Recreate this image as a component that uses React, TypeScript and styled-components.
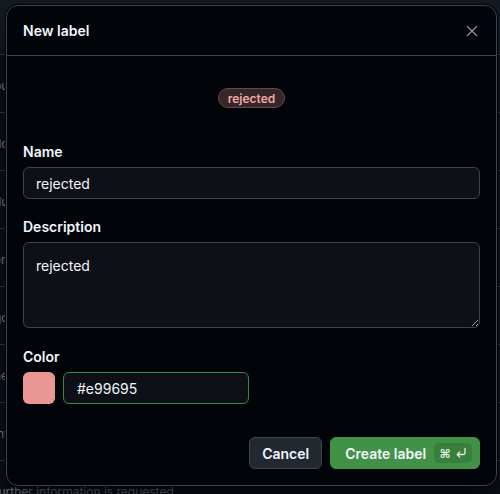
import styled, { createGlobalStyle } from 'styled-components';

const GlobalStyle = createGlobalStyle`
  html, body {
    margin: 0;
    padding: 0;
    background: #0d1117;
    overflow: hidden;
  }
  body {
    font-family: Inter, "Noto Sans", sans-serif;
    color: #f0f6fc;
  }
`;

const backRows = [
  'bug — something is not working',
  'documentation improvements',
  'duplicate of another issue',
  'enhancement request',
  'good first issue',
  'help wanted from others',
  'invalid input',
  'further information is requested',
];

function ReturnIcon() {
  return (
    <svg width="12" height="12" viewBox="0 0 12 12" fill="none">
      <path
        d="M10 1.5v4.5a1.5 1.5 0 0 1-1.5 1.5H2.2M4.8 4.9 2.2 7.5l2.6 2.6"
        stroke="currentColor"
        strokeWidth="1.3"
        strokeLinecap="round"
        strokeLinejoin="round"
      />
    </svg>
  );
}

function CloseIcon() {
  return (
    <svg width="12" height="12" viewBox="0 0 12 12" fill="none">
      <path d="M1.5 1.5l9 9M10.5 1.5l-9 9" stroke="currentColor" strokeWidth="1.3" strokeLinecap="round" />
    </svg>
  );
}

function App() {
  const color = '#e99695';

  return (
    <>
      <GlobalStyle />
      <Styled.Page>
        <Styled.TopStrip />
        {backRows.map((text) => (
          <Styled.BackRow key={text}>
            <Styled.BackText>{text}</Styled.BackText>
          </Styled.BackRow>
        ))}

        <Styled.Dialog>
          <Styled.Header>
            <Styled.Title>New label</Styled.Title>
            <Styled.CloseButton aria-label="Close">
              <CloseIcon />
            </Styled.CloseButton>
          </Styled.Header>

          <Styled.Body>
            <Styled.Preview>
              <Styled.Pill>rejected</Styled.Pill>
            </Styled.Preview>

            <Styled.Field>
              <Styled.Label>Name</Styled.Label>
              <Styled.Input defaultValue="rejected" />
            </Styled.Field>

            <Styled.Field spacing={19}>
              <Styled.Label>Description</Styled.Label>
              <Styled.TextArea defaultValue="rejected" />
            </Styled.Field>

            <Styled.Field spacing={17}>
              <Styled.Label>Color</Styled.Label>
              <Styled.ColorRow>
                <Styled.Swatch color={color} />
                <Styled.HexInput defaultValue={color} />
              </Styled.ColorRow>
            </Styled.Field>
          </Styled.Body>

          <Styled.Footer>
            <Styled.Button>Cancel</Styled.Button>
            <Styled.Button primary>
              Create label
              <Styled.Kbd>
                <span>⌘</span>
                <ReturnIcon />
              </Styled.Kbd>
            </Styled.Button>
          </Styled.Footer>
        </Styled.Dialog>
      </Styled.Page>
    </>
  );
}

export default App;

const Styled = {
  Page: styled.div`
    position: relative;
    width: 500px;
    height: 494px;
    overflow: hidden;
    background: #0d1117;
  `,
  TopStrip: styled.div`
    height: 55px;
    border-bottom: 1px solid #3d444d;
    box-sizing: border-box;
    background: #151b23;
  `,
  BackRow: styled.div`
    display: flex;
    align-items: center;
    height: 58px;
    box-sizing: border-box;
    border-bottom: 1px solid #3d444d;
  `,
  BackText: styled.span`
    margin-left: -6px;
    padding-top: 4px;
    font-size: 12px;
    color: #9198a1;
    white-space: nowrap;
  `,
  Dialog: styled.div`
    position: absolute;
    left: 6px;
    top: 5px;
    width: 491px;
    height: 481px;
    box-sizing: border-box;
    display: flex;
    flex-direction: column;
    background: #010409;
    border: 1px solid #3d444d;
    border-radius: 12px;
    box-shadow: 0 0 0 1px #010409, 0 24px 48px rgba(1, 4, 9, 0.8);
  `,
  Header: styled.div`
    flex-shrink: 0;
    display: flex;
    align-items: center;
    justify-content: space-between;
    height: 49px;
    padding: 0 12px 0 16px;
    border-bottom: 1px solid #3d444d;
  `,
  Title: styled.h1`
    margin: 0;
    font-size: 14px;
    font-weight: 600;
    color: #f0f6fc;
  `,
  CloseButton: styled.button`
    display: flex;
    align-items: center;
    justify-content: center;
    width: 24px;
    height: 24px;
    padding: 0;
    border: none;
    background: transparent;
    color: #9198a1;
  `,
  Body: styled.div`
    flex-shrink: 0;
    padding: 16px 16px 0;
    display: flex;
    flex-direction: column;
  `,
  Preview: styled.div`
    flex-shrink: 0;
    display: flex;
    align-items: center;
    justify-content: center;
    height: 52px;
    margin-bottom: 18px;
  `,
  Pill: styled.span`
    display: inline-flex;
    align-items: center;
    height: 20px;
    box-sizing: border-box;
    padding: 0 9px;
    border-radius: 10px;
    font-size: 12px;
    font-weight: 600;
    color: #f0a9a7;
    background: #352627;
    border: 1px solid #6b4848;
  `,
  Field: styled.div<{ spacing?: number }>`
    flex-shrink: 0;
    display: flex;
    flex-direction: column;
    gap: 5px;
    margin-bottom: ${({ spacing }) => spacing ?? 18}px;
  `,
  Label: styled.label`
    font-size: 14px;
    font-weight: 600;
    line-height: 20px;
    color: #f0f6fc;
  `,
  Input: styled.input`
    height: 32px;
    box-sizing: border-box;
    padding: 0 12px;
    font-family: inherit;
    font-size: 14px;
    color: #f0f6fc;
    background: #0d1117;
    border: 1px solid #3d444d;
    border-radius: 6px;
    outline: none;
  `,
  TextArea: styled.textarea`
    height: 86px;
    box-sizing: border-box;
    padding: 13px 12px;
    font-family: inherit;
    font-size: 14px;
    line-height: 20px;
    color: #f0f6fc;
    background: #0d1117;
    border: 1px solid #3d444d;
    border-radius: 6px;
    outline: none;
    resize: vertical;
  `,
  ColorRow: styled.div`
    display: flex;
    align-items: center;
    gap: 8px;
  `,
  Swatch: styled.div<{ color: string }>`
    width: 32px;
    height: 32px;
    border-radius: 6px;
    background: ${({ color }) => color};
  `,
  HexInput: styled.input`
    width: 186px;
    height: 32px;
    box-sizing: border-box;
    padding: 0 13px;
    font-family: inherit;
    font-size: 14px;
    color: #f0f6fc;
    background: #0d1117;
    border: 1px solid #3a8a3e;
    border-radius: 6px;
    outline: none;
  `,
  Footer: styled.div`
    flex-shrink: 0;
    display: flex;
    justify-content: flex-end;
    gap: 8px;
    padding: 16px;
  `,
  Button: styled.button<{ primary?: boolean }>`
    display: inline-flex;
    align-items: center;
    gap: 8px;
    height: 32px;
    box-sizing: border-box;
    padding: ${({ primary }) => (primary ? '0 7px 0 14px' : '0 12px')};
    font-family: inherit;
    font-size: 14px;
    font-weight: 600;
    color: #f0f6fc;
    background: ${({ primary }) => (primary ? '#419146' : '#212830')};
    border: 1px solid ${({ primary }) => (primary ? '#419146' : '#3d444d')};
    border-radius: 6px;
  `,
  Kbd: styled.span`
    display: inline-flex;
    align-items: center;
    gap: 4px;
    height: 20px;
    padding: 0 5px;
    border-radius: 5px;
    background: rgba(1, 4, 9, 0.12);
    font-size: 12px;
    color: #e6f0e6;
  `,
};
